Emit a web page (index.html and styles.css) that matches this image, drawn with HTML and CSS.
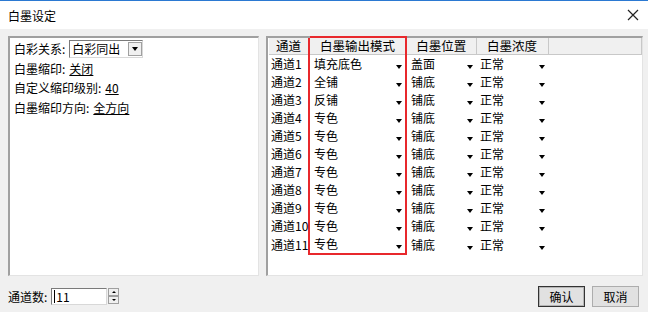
FILE: index.html
```html
<!DOCTYPE html>
<html lang="zh-CN">
<head>
    <meta charset="UTF-8">
    <title>白墨设定</title>
    <link rel="stylesheet" href="styles.css">
</head>
<body>
    <div class="titlebar">
        <span class="title">白墨设定</span>
        <svg class="close" width="12" height="12" viewBox="0 0 12 12">
            <path d="M1 1 L11 11 M11 1 L1 11" stroke="#222" stroke-width="1.2" fill="none"/>
        </svg>
    </div>

    <div class="main">
        <div class="panel left">
            <div class="line">
                <span>白彩关系:</span>
                <span class="combo"><span class="combo-text">白彩同出</span><span class="combo-btn"><i class="arrow"></i></span></span>
            </div>
            <div class="line"><span>白墨缩印:</span><span class="link">关闭</span></div>
            <div class="line"><span>自定义缩印级别:</span><span class="link">40</span></div>
            <div class="line"><span>白墨缩印方向:</span><span class="link">全方向</span></div>
        </div>

        <div class="panel right">
            <table class="grid">
                <colgroup>
                    <col class="c1"><col class="c2"><col class="c3"><col class="c4"><col>
                </colgroup>
                <thead>
                    <tr>
                        <th>通道</th>
                        <th class="hl top">白墨输出模式</th>
                        <th>白墨位置</th>
                        <th>白墨浓度</th>
                        <th></th>
                    </tr>
                </thead>
                <tbody id="rows"></tbody>
            </table>
        </div>
    </div>

    <div class="footer">
        <label class="count">通道数:</label>
        <span class="spin-input"><span class="caret"></span>11</span>
        <span class="spin">
            <span class="spin-btn"><i class="up"></i></span>
            <span class="spin-btn"><i class="down"></i></span>
        </span>
        <span class="spacer"></span>
        <button class="btn default">确认</button>
        <button class="btn">取消</button>
    </div>

    <script>
        const modes = ["填充底色", "全铺", "反铺", "专色", "专色", "专色", "专色", "专色", "专色", "专色", "专色"];
        const tbody = document.getElementById("rows");
        modes.forEach(function(mode, i) {
            const pos = i === 0 ? "盖面" : "铺底";
            const last = i === modes.length - 1 ? " bottom" : "";
            const tr = document.createElement("tr");
            tr.innerHTML = `
                <td class="name">通道${i + 1}</td>
                <td class="hl${last}"><div class="cell"><span>${mode}</span><i class="arrow"></i></div></td>
                <td><div class="cell"><span>${pos}</span><i class="arrow"></i></div></td>
                <td><div class="cell"><span>正常</span><i class="arrow"></i></div></td>
                <td></td>
            `;
            tbody.appendChild(tr);
        });
    </script>
</body>
</html>
```

FILE: styles.css
```css
body {
    margin: 0;
    width: 648px;
    height: 312px;
    background: #f0f0f0;
    font-family: "Noto Sans CJK SC", "Liberation Sans", sans-serif;
    font-size: 12px;
    color: #000;
    overflow: hidden;
}
.titlebar {
    height: 28px;
    border-top: 1px solid #2b79d2;
    background: #fff;
    display: flex;
    align-items: center;
    justify-content: space-between;
    padding: 0 9px 0 8px;
}
.title {
    font-size: 12px;
}
.main {
    display: flex;
    gap: 7px;
    padding: 7px 5px 0 8px;
    height: 240px;
}
.panel {
    background: #fff;
    border-top: 2px solid #a0a0a0;
    border-left: 2px solid #a0a0a0;
    border-right: 1px solid #e3e3e3;
    border-bottom: 1px solid #e3e3e3;
    box-sizing: border-box;
    height: 240px;
}
.left {
    width: 251px;
    padding: 1px 4px;
}
.right {
    flex: 1;
    padding: 0 0 0 1px;
}
.line {
    height: 19.5px;
    display: flex;
    align-items: center;
    gap: 4px;
}
.link {
    text-decoration: underline;
}
.combo {
    display: inline-flex;
    align-items: center;
    height: 16px;
    border-top: 1px solid #7a7a7a;
    border-left: 1px solid #7a7a7a;
    border-right: 1px solid #d8d8d8;
    border-bottom: 1px solid #d8d8d8;
}
.combo-text {
    width: 56px;
    padding-left: 2px;
}
.combo-btn {
    width: 14px;
    height: 14px;
    background: #f0f0f0;
    border: 1px solid #a0a0a0;
    box-sizing: border-box;
    display: flex;
    align-items: center;
    justify-content: center;
}
.arrow {
    display: inline-block;
    width: 0;
    height: 0;
    border-left: 3.5px solid transparent;
    border-right: 3.5px solid transparent;
    border-top: 4px solid #000;
}
.grid {
    border-collapse: collapse;
    table-layout: fixed;
    width: 100%;
    margin-top: -2px;
}
.c1 { width: 40px; }
.c2 { width: 97px; }
.c3 { width: 70px; }
.c4 { width: 72px; }
.grid th {
    height: 16px;
    padding: 0;
    font-weight: normal;
    background: #f0f0f0;
    border-top: 2px solid #a0a0a0;
    border-right: 1px solid #c8c8c8;
    border-bottom: 1px solid #c8c8c8;
    line-height: 16px;
    font-size: 12.5px;
}
.grid td {
    height: 18px;
    padding: 0;
    line-height: 18px;
    white-space: nowrap;
}
.grid td.name {
    padding-left: 2px;
}
.cell {
    display: flex;
    justify-content: space-between;
    align-items: center;
    padding: 0 3px 0 4px;
}
.cell .arrow {
    margin-top: 6px;
}
.grid .hl {
    border-left: 2px solid #e8282c;
    border-right: 2px solid #e8282c;
}
.grid .hl.top {
    border-top: 2px solid #e8282c;
}
.grid .hl.bottom {
    border-bottom: 2px solid #e8282c;
}
.footer {
    display: flex;
    align-items: center;
    padding: 9px 9px 0 8px;
    height: 22px;
}
.count {
    margin-right: 4px;
}
.spin-input {
    width: 56px;
    height: 17px;
    box-sizing: border-box;
    background: #fff;
    border-top: 1px solid #7a7a7a;
    border-left: 1px solid #7a7a7a;
    border-right: 1px solid #d8d8d8;
    border-bottom: 1px solid #d8d8d8;
    display: flex;
    align-items: center;
    padding-left: 2px;
    font-size: 12px;
}
.caret {
    width: 1px;
    height: 13px;
    background: #000;
    margin-right: 1px;
}
.spin {
    display: flex;
    flex-direction: column;
    margin-left: 1px;
}
.spin-btn {
    width: 11px;
    height: 8px;
    background: #f0f0f0;
    border: 1px solid #a0a0a0;
    box-sizing: border-box;
    display: flex;
    align-items: center;
    justify-content: center;
}
.spin-btn .up {
    border-left: 2px solid transparent;
    border-right: 2px solid transparent;
    border-bottom: 2px solid #000;
}
.spin-btn .down {
    border-left: 2px solid transparent;
    border-right: 2px solid transparent;
    border-top: 2px solid #000;
}
.spacer {
    flex: 1;
}
.btn {
    font-family: "Noto Sans CJK SC", "Liberation Sans", sans-serif;
    font-size: 12px;
    width: 47px;
    height: 21px;
    padding: 0;
    background: #e1e1e1;
    border: 1px solid #adadad;
    margin-left: 7px;
    color: #000;
}
.btn.default {
    border: 1px solid #333;
    box-shadow: inset 0 0 0 1px #b5b5b5;
}
```
